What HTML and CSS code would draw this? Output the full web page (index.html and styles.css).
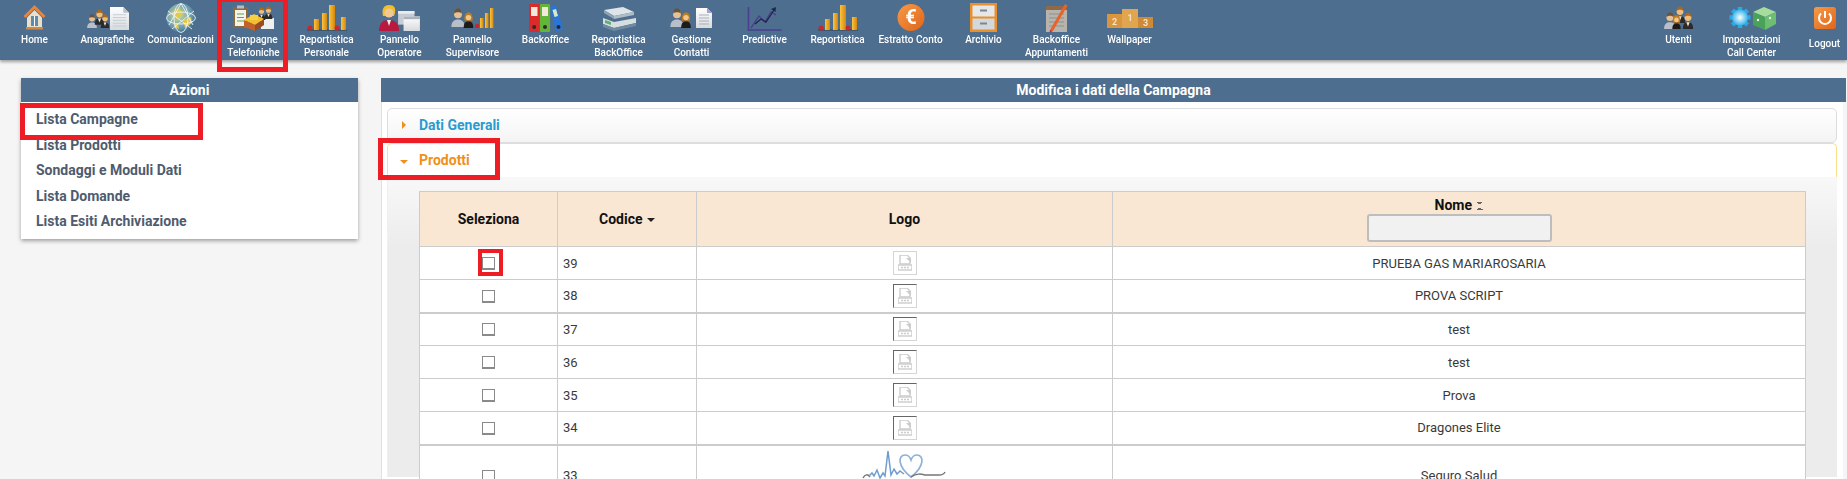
FILE: index.html
```html
<!DOCTYPE html>
<html lang="it">
<head>
<meta charset="utf-8">
<title>Modifica i dati della Campagna</title>
<link rel="stylesheet" href="styles.css">
</head>
<body>
<svg class="defs" width="0" height="0" aria-hidden="true">
  <defs>
    <linearGradient id="gold" x1="0" y1="0" x2="1" y2="0"><stop offset="0" stop-color="#fbc63e"/><stop offset="1" stop-color="#d5860d"/></linearGradient>
    <linearGradient id="page" x1="0" y1="0" x2="0" y2="1"><stop offset="0" stop-color="#fff"/><stop offset="1" stop-color="#d7dade"/></linearGradient>
    <linearGradient id="orange" x1="0" y1="0" x2="1" y2="1"><stop offset="0" stop-color="#f79b45"/><stop offset="1" stop-color="#e0641a"/></linearGradient>
    <radialGradient id="globe" cx=".4" cy=".4" r=".7"><stop offset="0" stop-color="#cfe08a"/><stop offset=".6" stop-color="#6f9fb5"/><stop offset="1" stop-color="#37607c"/></radialGradient>
    <radialGradient id="gear" cx=".5" cy=".5" r=".5"><stop offset="0" stop-color="#fff"/><stop offset="1" stop-color="#35b3ea"/></radialGradient>
    <symbol id="person" viewBox="0 0 14 20">
      <path d="M1 20c0-6 2-8 6-8s6 2 6 8z" fill="#2b2a2a"/>
      <path d="M5 12l2 5 2-5z" fill="#f2e5c8"/>
      <circle cx="7" cy="6.5" r="4" fill="#f0bd7d"/>
      <path d="M3 6c0-4 2-5.500 4-5.500s4 1.500 4 5.500c-2-2-6-2-8 0z" fill="#a8691f"/>
    </symbol>
    <symbol id="woman" viewBox="0 0 14 20">
      <path d="M1 20c0-6 2-8 6-8s6 2 6 8z" fill="#1f1a18"/>
      <path d="M2 11C1 3 4 .5 7 .5s6 2.500 5 10.500z" fill="#c07a1e"/>
      <circle cx="7" cy="7" r="3.400" fill="#f3c68a"/>
    </symbol>
    <symbol id="grey" viewBox="0 0 14 20">
      <path d="M0 20c0-6 3-8 7-8s7 2 7 8z" fill="#b9bfc8"/>
      <circle cx="7" cy="6.500" r="4.200" fill="#e6c096"/>
      <path d="M3 6c0-4 2-5.500 4-5.500s4 1.500 4 5.500c-2-2-6-2-8 0z" fill="#6e5233"/>
    </symbol>
    <symbol id="doc" viewBox="0 0 20 24">
      <path d="M0 0h14l6 6v18H0z" fill="url(#page)"/>
      <path d="M14 0l6 6h-6z" fill="#b8c0c8"/>
      <path d="M3 8h14M3 11h14M3 14h14M3 17h14M3 20h14" stroke="#c3ccd6" stroke-width="1"/>
    </symbol>
    <symbol id="bars" viewBox="0 0 40 26">
      <rect x="0" y="24" width="40" height="2" fill="#33424f" opacity=".5"/>
      <circle cx="3" cy="23" r="2.500" fill="#c8272b"/>
      <rect x="7" y="14" width="5" height="11" fill="url(#gold)"/>
      <rect x="15" y="8" width="5" height="17" fill="url(#gold)"/>
      <rect x="22" y="0" width="6" height="25" fill="url(#gold)"/>
      <circle cx="30" cy="23" r="2.500" fill="#c8272b"/>
      <rect x="34" y="12" width="5" height="13" fill="url(#gold)"/>
    </symbol>
    <symbol id="windows" viewBox="0 0 24 22">
      <rect x="0" y="0" width="18" height="15" fill="#c6ccd3"/>
      <rect x="0" y="0" width="18" height="3" fill="#e9ecef"/>
      <rect x="6" y="6" width="18" height="16" fill="url(#page)"/>
      <rect x="6" y="6" width="18" height="3" fill="#aab2ba"/>
    </symbol>
    <symbol id="noimage" viewBox="0 0 14 16">
      <path d="M2 0h7l3 3v6H2z" fill="none" stroke="#ccc" stroke-width="1.400"/>
      <path d="M8 3h5v5" fill="#ccc"/>
      <rect x="0" y="10" width="14" height="5" fill="none" stroke="#ccc" stroke-width="1.400"/>
      <path d="M3 12.500h8" stroke="#ccc" stroke-width="1.400" stroke-dasharray="2 1"/>
    </symbol>
  </defs>
</svg>

<header class="topbar">
  <nav class="menu">
    <a class="item"><svg class="ico" width="23" height="30" viewBox="0 0 23 30"><path d="M4 14.500 11.500 7 19 14.500V25.500H4z" fill="#e8e0cc"/><rect x="8" y="13" width="7" height="10" fill="#5f8cab"/><path d="M11.500 13v10" stroke="#fff"/><rect x="3" y="24" width="17" height="2.500" fill="#cf8a4a"/><path d="M1.500 14 11.500 4l10 10" fill="none" stroke="#e9853a" stroke-width="2.800"/></svg><span class="label">Home</span></a>
    <a class="item"><svg class="ico" width="42" height="30" viewBox="0 0 42 30"><use href="#doc" x="23" y="4" width="19" height="23"/><use href="#grey" x="0" y="11" width="10" height="14"/><use href="#person" x="7" y="6" width="11" height="16"/><use href="#person" x="13" y="11" width="10" height="14"/></svg><span class="label">Anagrafiche</span></a>
    <a class="item"><svg class="ico" width="30" height="30" viewBox="0 0 30 30"><circle cx="15" cy="15" r="14.500" fill="url(#globe)"/><path d="M6 9l7-4 4 6-6 5zM17 17l8-3 1 6-7 5zM7 20l5 1 1 5-4-2z" fill="#e2c94a"/><g fill="none" stroke="#eef3f6" stroke-width=".9"><ellipse cx="15" cy="15" rx="7" ry="14.500"/><ellipse cx="15" cy="15" rx="14.500" ry="6"/><path d="M2 8 26 26M28 8 6 26M15 .5 3 22M15 .5 27 22"/></g></svg><span class="label">Comunicazioni</span></a>
    <a class="item marked"><svg class="ico" width="42" height="30" viewBox="0 0 42 30"><rect x="0" y="4" width="15" height="21" fill="#8a6a3a"/><rect x="2" y="7" width="11" height="16" fill="#f4f2ea"/><rect x="4" y="2.500" width="7" height="3" fill="#b8bec4"/><path d="M4 11h7M4 14.500h7M4 18h7" stroke="#5aa64a"/><rect x="28" y="15" width="13" height="11" fill="#eef0f2"/><use href="#person" x="24" y="4" width="9" height="13"/><use href="#person" x="31" y="3" width="9" height="13"/><path d="M11 17 21 11l10 5-9 6z" fill="#f4bf2e"/><path d="M11 17l11 5v6l-11-4z" fill="#c3612a"/><path d="M22 22l9-6v6l-9 6z" fill="#9c4a20"/><path d="M17 12h8v5h-8z" fill="#f7d04a"/></svg><span class="label">Campagne<br>Telefoniche</span><i class="mark mark-menu"></i></a>
    <a class="item"><svg class="ico" width="40" height="30" viewBox="0 0 40 30"><use href="#bars" x="0" y="2" width="40" height="26"/></svg><span class="label">Reportistica<br>Personale</span></a>
    <a class="item"><svg class="ico" width="42" height="30" viewBox="0 0 42 30"><path d="M0 28c0-8 4-11 10-11s10 3 10 11z" fill="#b8193f"/><path d="M8 17l2 6 2-6z" fill="#eee"/><path d="M4 13C2 5 6 2 10 2c5 0 8 3 5 11z" fill="#efbf2d"/><circle cx="10" cy="10" r="4.500" fill="#f3c893"/><use href="#windows" x="18" y="8" width="24" height="20"/></svg><span class="label">Pannello<br>Operatore</span></a>
    <a class="item"><svg class="ico" width="43" height="30" viewBox="0 0 43 30"><use href="#grey" x="0" y="5" width="14" height="19"/><use href="#woman" x="11" y="9" width="13" height="16"/><circle cx="26" cy="23" r="2.200" fill="#c8272b"/><rect x="29" y="15" width="3.500" height="10" fill="url(#gold)"/><rect x="34" y="10" width="3.500" height="15" fill="url(#gold)"/><rect x="39" y="5" width="3.500" height="20" fill="url(#gold)"/></svg><span class="label">Pannello<br>Supervisore</span></a>
    <a class="item"><svg class="ico" width="34" height="30" viewBox="0 0 34 30"><rect x="0" y="1" width="10.500" height="28" rx="1" fill="#dc2a2a"/><rect x="2" y="4" width="6.500" height="9" fill="#f2e9d8"/><circle cx="5.200" cy="24" r="2" fill="#2c2c2c"/><rect x="11" y="1" width="10" height="28" rx="1" fill="#63b53a"/><rect x="13" y="4" width="6" height="9" fill="#f2e9d8"/><circle cx="16" cy="24" r="2" fill="#2c2c2c"/><path d="M21 4l6-1.500L34 26l-7 2.500z" fill="#2a76d8"/><path d="M23.500 7l3.500-1 2 7-3.500 1z" fill="#d7e9c5"/><circle cx="29.500" cy="24" r="2" fill="#1b2a44"/></svg><span class="label">Backoffice</span></a>
    <a class="item"><svg class="ico" width="36" height="30" viewBox="0 0 36 30"><path d="M3 7 22 4l11 5-20 4z" fill="#dfe4e8"/><path d="M3 7l10 6v3L3 10z" fill="#8ea4b4"/><path d="M13 13l20-4v3l-20 4z" fill="#aebcc6"/><path d="M2 15l11 4 22-4v5l-22 5-11-4z" fill="#d8dde0"/><path d="M4 17l6 2v3l-6-2z" fill="#5cb070"/><path d="M2 21l11 4 22-5v3l-22 5-11-4z" fill="#6d8ba3"/></svg><span class="label">Reportistica<br>BackOffice</span></a>
    <a class="item"><svg class="ico" width="43" height="30" viewBox="0 0 43 30"><use href="#grey" x="0" y="5" width="14" height="19"/><use href="#woman" x="9" y="9" width="14" height="16"/><path d="M26 5h11l5 5v15H26z" fill="url(#page)"/><path d="M37 5l5 5h-5z" fill="#a79fd0"/><path d="M29 12h10M29 15h10M29 18h10M29 21h10" stroke="#a9b1ba"/></svg><span class="label">Gestione<br>Contatti</span></a>
    <a class="item"><svg class="ico" width="36" height="30" viewBox="0 0 36 30"><path d="M1.500 4v23h33" fill="none" stroke="#4b3f8f" stroke-width="1.600"/><path d="M4 25 12 13l6 6 6-10 5 3" fill="none" stroke="#4b3f8f" stroke-width="1.400"/><path d="M8 21l6-5 5 3 8-12" fill="none" stroke="#1c2a44" stroke-width="1.300"/><path d="M24 6l5-2-.5 5z" fill="#1c2a44"/></svg><span class="label">Predictive</span></a>
    <a class="item"><svg class="ico" width="40" height="30" viewBox="0 0 40 30"><use href="#bars" x="0" y="2" width="40" height="26"/></svg><span class="label">Reportistica</span></a>
    <a class="item"><svg class="ico" width="28" height="30" viewBox="0 0 28 30"><circle cx="14" cy="14.500" r="13.500" fill="url(#orange)"/><text x="14" y="21" class="euro">€</text></svg><span class="label">Estratto Conto</span></a>
    <a class="item"><svg class="ico" width="27" height="30" viewBox="0 0 27 30"><rect x="0" y="0" width="27" height="29" fill="#e8902c"/><rect x="2.500" y="2.500" width="22" height="11" fill="#e5e7e9"/><rect x="2.500" y="15.500" width="22" height="11" fill="#d4d8dc"/><rect x="10" y="6.500" width="7" height="2" fill="#7b8791"/><rect x="10" y="19.500" width="7" height="2" fill="#7b8791"/></svg><span class="label">Archivio</span></a>
    <a class="item"><svg class="ico" width="23" height="30" viewBox="0 0 23 30"><rect x="1" y="3" width="21" height="26" fill="#b6b4ac"/><rect x="1" y="3" width="21" height="4" fill="#8f6a4a"/><path d="M4 11h15M4 15h15M4 19h15M4 23h15" stroke="#8f918d"/><path d="M5 27 20 1l2.500 1.500L8 28z" fill="#e8632c"/><path d="M5 27l3 1-3.500 1.500z" fill="#c8272b"/></svg><span class="label">Backoffice<br>Appuntamenti</span></a>
    <a class="item"><svg class="ico" width="46" height="30" viewBox="0 0 46 30"><rect x="0" y="11" width="15" height="14" fill="#d9963f"/><rect x="15" y="6" width="16" height="19" fill="#e2a54f"/><rect x="31" y="14" width="15" height="11" fill="#cf8a37"/><text x="7.500" y="22" class="podium">2</text><text x="23" y="18" class="podium">1</text><text x="38.500" y="23" class="podium">3</text></svg><span class="label">Wallpaper</span></a>
  </nav>
  <nav class="menu menu-right">
    <a class="item"><svg class="ico" width="30" height="30" viewBox="0 0 30 30"><use href="#grey" x="0" y="9" width="12" height="17"/><use href="#person" x="10" y="3" width="12" height="17"/><use href="#woman" x="7" y="12" width="11" height="14"/><use href="#person" x="18" y="9" width="12" height="17"/></svg><span class="label">Utenti</span></a>
    <a class="item"><svg class="ico" width="48" height="30" viewBox="0 0 48 30"><path d="M12 4v21M1.500 14.500h21M4.500 7l15 15M19.500 7l-15 15" stroke="#2aa9e4" stroke-width="4.500"/><circle cx="12" cy="14.500" r="8" fill="url(#gear)"/><path d="M25 9l11-5 12 5-11 5z" fill="#a6dc9c"/><path d="M25 9l12 5v13l-12-5z" fill="#4aa15a"/><path d="M37 14l11-5v12l-11 6z" fill="#6dbd72"/><circle cx="30" cy="17" r="1.200" fill="#e8f4e4"/><circle cx="42" cy="15" r="1.200" fill="#e8f4e4"/></svg><span class="label">Impostazioni<br>Call Center</span></a>
    <a class="item"><svg class="ico" width="22" height="30" viewBox="0 0 22 30"><rect x="0" y="4" width="22" height="22" rx="2.500" fill="url(#orange)"/><path d="M7 10.500a6 6 0 1 0 8 0" fill="none" stroke="#fff" stroke-width="2"/><path d="M11 8v7" stroke="#fff" stroke-width="2"/></svg><span class="label label-low">Logout</span></a>
  </nav>
</header>

<main class="layout">
  <aside class="panel side">
    <h2 class="panel-title">Azioni</h2>
    <ul class="actions">
      <li class="action marked"><span>Lista Campagne</span><i class="mark mark-list"></i></li>
      <li class="action">Lista Prodotti</li>
      <li class="action">Sondaggi e Moduli Dati</li>
      <li class="action">Lista Domande</li>
      <li class="action">Lista Esiti Archiviazione</li>
    </ul>
  </aside>

  <section class="panel content">
    <h2 class="panel-title">Modifica i dati della Campagna</h2>
    <div class="panel-body">
      <div class="acc acc-closed"><span class="arrow-right"></span>Dati Generali</div>
      <div class="acc acc-open marked"><span class="arrow-down"></span>Prodotti<i class="mark mark-acc"></i></div>
      <div class="acc-body">
        <table class="grid">
          <colgroup><col class="c1"><col class="c2"><col class="c3"><col></colgroup>
          <thead>
            <tr>
              <th>Seleziona</th>
              <th>Codice <span class="caret"></span></th>
              <th>Logo</th>
              <th class="name-col"><div class="nome">Nome <span class="sort"></span></div><input class="filter" type="text" aria-label="Nome"></th>
            </tr>
          </thead>
          <tbody>
            <tr>
              <td class="check marked"><input class="box" type="checkbox" aria-label="39"><i class="mark mark-box"></i></td><td class="code">39</td>
              <td class="center"><span class="noimg first"><svg width="14" height="16"><use href="#noimage"/></svg></span></td>
              <td class="center">PRUEBA GAS MARIAROSARIA</td>
            </tr>
            <tr>
              <td class="check"><input class="box" type="checkbox" aria-label="38"></td><td class="code">38</td>
              <td class="center"><span class="noimg"><svg width="14" height="16"><use href="#noimage"/></svg></span></td>
              <td class="center">PROVA SCRIPT</td>
            </tr>
            <tr class="heavy">
              <td class="check"><input class="box" type="checkbox" aria-label="37"></td><td class="code">37</td>
              <td class="center"><span class="noimg"><svg width="14" height="16"><use href="#noimage"/></svg></span></td>
              <td class="center">test</td>
            </tr>
            <tr>
              <td class="check"><input class="box" type="checkbox" aria-label="36"></td><td class="code">36</td>
              <td class="center"><span class="noimg"><svg width="14" height="16"><use href="#noimage"/></svg></span></td>
              <td class="center">test</td>
            </tr>
            <tr>
              <td class="check"><input class="box" type="checkbox" aria-label="35"></td><td class="code">35</td>
              <td class="center"><span class="noimg"><svg width="14" height="16"><use href="#noimage"/></svg></span></td>
              <td class="center">Prova</td>
            </tr>
            <tr>
              <td class="check"><input class="box" type="checkbox" aria-label="34"></td><td class="code">34</td>
              <td class="center"><span class="noimg"><svg width="14" height="16"><use href="#noimage"/></svg></span></td>
              <td class="center">Dragones Elite</td>
            </tr>
            <tr class="heavy tall">
              <td class="check"><input class="box" type="checkbox" aria-label="33"></td><td class="code">33</td>
              <td class="center"><svg class="logo33" width="88" height="56" viewBox="0 0 88 56"><path d="M2 29c2-4 5-4 7-1" fill="none" stroke="#777" stroke-width="1.500"/><path d="M8 27l3-3 2 3 3-6 3 8 3-5 2 3 3-25 3 24 3-6 3 5 3-3 4 3" fill="none" stroke="#6f9ccf" stroke-width="1.500"/><path d="M50 28C36 17 37 6 44 6c3 0 5 2 6 5 1-3 3-5 6-5 7 0 8 11-6 22z" fill="none" stroke="#8fb0d8" stroke-width="1.700"/><path d="M50 28c6-4 10-3 14-2h14c3 0 5-1 6-3" fill="none" stroke="#777" stroke-width="1.500"/></svg></td>
              <td class="center">Seguro Salud</td>
            </tr>
          </tbody>
        </table>
      </div>
    </div>
  </section>
</main>
</body>
</html>
```

FILE: styles.css
```css
* { box-sizing: border-box; }

html, body {
  margin: 0;
  height: 479px;
  overflow: hidden;
}

body {
  background: #f5f5f5;
  color: #333;
  font-family: Roboto, "Liberation Sans", sans-serif;
}

.defs { position: absolute; }

.marked { position: relative; }

.mark {
  position: absolute;
  border: 5px solid #ee1c25;
  pointer-events: none;
}

.mark-menu { left: -4px; top: -3px; width: 71px; height: 75px; }
.mark-list { left: -16px; top: -4px; width: 183px; height: 37px; }
.mark-acc { left: -10px; top: -6px; width: 122px; height: 42px; }
.mark-box { left: 58px; top: 2px; width: 25px; height: 27px; border-width: 4px; }

/* top bar */
.topbar {
  display: flex;
  justify-content: space-between;
  height: 60px;
  background: #4d6e8e;
  box-shadow: 0 2px 3px rgba(0, 0, 0, .35);
}

.menu {
  display: flex;
  gap: 8px;
  padding-left: 2px;
}

.menu-right {
  margin-right: -10px;
  padding-left: 0;
}

.item {
  display: flex;
  flex-direction: column;
  align-items: center;
  width: 65px;
  padding-top: 3px;
  white-space: nowrap;
}

.ico {
  flex: none;
  filter: blur(.4px);
}

.label {
  color: #fff;
  font-size: 10px;
  font-weight: 500;
  line-height: 13px;
  text-align: center;
  filter: blur(.3px);
}

.label-low { margin-top: 4px; }

.euro {
  fill: #fff;
  font-size: 20px;
  font-weight: 700;
  text-anchor: middle;
}

.podium {
  fill: #f6e3c4;
  font-size: 9px;
  font-weight: 700;
  text-anchor: middle;
}

/* layout */
.layout {
  display: flex;
  gap: 23px;
  align-items: flex-start;
  padding: 18px 1px 0 21px;
}

.panel-title {
  margin: 0;
  height: 24px;
  background: #4d6e8e;
  color: #fff;
  font-size: 14px;
  font-weight: 700;
  line-height: 24px;
  text-align: center;
}

.side {
  flex: none;
  width: 337px;
  background: #fff;
  box-shadow: 0 2px 4px rgba(0, 0, 0, .35);
}

.actions {
  margin: 0;
  padding: 5px 0 4px 15px;
  list-style: none;
}

.action {
  height: 25.600px;
  color: #4f5b6e;
  font-size: 14px;
  font-weight: 700;
  line-height: 25.600px;
}

.content { flex: 1; min-width: 0; }

.panel-body {
  margin-right: 3px;
  height: 400px;
  padding: 6px 6px 0 5px;
  background: #fff;
  border-left: 1px solid #e0e0e0;
}

.acc {
  height: 35px;
  padding-left: 31px;
  border: 1px solid #ddd;
  border-radius: 5px;
  font-size: 14px;
  font-weight: 700;
  line-height: 33px;
}

.acc-closed {
  color: #2a9bd0;
  background: linear-gradient(#fff, #f4f4f4);
}

.acc-open {
  height: 34px;
  color: #f0901a;
  background: #fff;
  border-color: #fbe08a;
  border-bottom: 0;
  border-radius: 5px 5px 0 0;
}

.arrow-right, .arrow-down {
  display: inline-block;
  width: 0;
  height: 0;
  vertical-align: 1px;
}

.arrow-right {
  margin: 0 13px 0 -17px;
  border-left: 4px solid #f0901a;
  border-top: 4px solid transparent;
  border-bottom: 4px solid transparent;
}

.arrow-down {
  margin: 0 11px 0 -19px;
  border-top: 4px solid #f0901a;
  border-left: 4px solid transparent;
  border-right: 4px solid transparent;
}

.acc-body {
  height: 300px;
  padding: 14px 0 0 31px;
  background: linear-gradient(#f8f8f8, #ececec 70px);
  border-left: 1px solid #f0f0f0;
}

/* table */
.grid {
  width: 1387px;
  table-layout: fixed;
  border-collapse: collapse;
  background: #fff;
}

.c1 { width: 138px; }
.c2 { width: 139px; }
.c3 { width: 416px; }

.grid th, .grid td {
  border: 1px solid #ccc;
  padding: 0;
}

.grid th {
  height: 55px;
  background: #fae7d3;
  color: #111;
  font-size: 14px;
  font-weight: 700;
  text-align: center;
  vertical-align: middle;
}

.grid .name-col { vertical-align: bottom; }

.grid td {
  height: 33px;
  color: #3a3a3a;
  font-size: 13px;
}

.heavy td { border-top: 2px solid #ccc; }
.tall td { height: 62px; }

.center { text-align: center; }
.check { text-align: center; }
.code { padding-left: 5px !important; }

.box {
  appearance: none;
  display: block;
  width: 13px;
  height: 13px;
  margin: 1px auto 0;
  background: #fff;
  border: 1px solid #8a8a8a;
  border-bottom-width: 2px;
}

.noimg {
  display: flex;
  align-items: center;
  justify-content: center;
  width: 24px;
  height: 24px;
  margin: 0 auto;
  border: 1px solid #d5d5d5;
  border-top-color: #666;
  border-left-color: #666;
}

.noimg.first {
  border-color: #d5d5d5;
}

.logo33 {
  display: block;
  margin: 2px auto 0;
}

.caret {
  display: inline-block;
  width: 0;
  height: 0;
  margin-left: 1px;
  vertical-align: 2px;
  border-top: 4px solid #222;
  border-left: 4px solid transparent;
  border-right: 4px solid transparent;
}

.nome { line-height: 16px; }

.sort {
  display: inline-block;
  width: 6px;
  height: 8px;
  margin-left: 2px;
  vertical-align: 0;
  background:
    linear-gradient(to top right, transparent 50%, #666 50%) 0 0 / 3px 3px no-repeat,
    linear-gradient(to top left, transparent 50%, #666 50%) 3px 0 / 3px 3px no-repeat,
    linear-gradient(to bottom right, transparent 50%, #666 50%) 0 5px / 3px 3px no-repeat,
    linear-gradient(to bottom left, transparent 50%, #666 50%) 3px 5px / 3px 3px no-repeat;
}

.filter {
  display: block;
  width: 185px;
  height: 28px;
  margin: 1px auto 4px;
  background: #f1f1f1;
  border: 2px solid #bdbdbd;
  border-radius: 3px;
}
```
